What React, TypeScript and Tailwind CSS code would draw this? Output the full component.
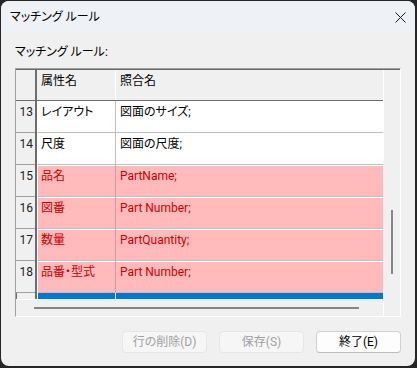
import React from "react";

type Row = { n: number; a: string; b: string; pink: boolean };

const rows: Row[] = [
  { n: 13, a: "レイアウト", b: "図面のサイズ;", pink: false },
  { n: 14, a: "尺度", b: "図面の尺度;", pink: false },
  { n: 15, a: "品名", b: "PartName;", pink: true },
  { n: 16, a: "図番", b: "Part Number;", pink: true },
  { n: 17, a: "数量", b: "PartQuantity;", pink: true },
  { n: 18, a: "品番・型式", b: "Part Number;", pink: true },
];

function DataRow({ r }: { r: Row }) {
  const bg = r.pink ? "bg-[#ffbbbb]" : "bg-white";
  const txt = r.pink ? "text-[#cc0000]" : "text-black";
  return (
    <div className="flex h-[32px]">
      <div className="w-[21px] flex border-r-2 border-r-[#6d6d6d]">
        <div className="flex-1 bg-[#f0f0f0] border-b border-b-[#a0a0a0] text-right pr-[2px] pt-[3px] leading-[16px] text-[12px] text-[#222]">
          {r.n}
        </div>
      </div>
      <div className={`w-[78px] border-t border-l border-white border-b border-b-[#c0c0c0] ${bg}`}>
        <div className={`pl-[3px] pt-[2px] leading-[16px] text-[12px] whitespace-nowrap ${txt}`}>{r.a}</div>
      </div>
      <div className={`w-px ${r.pink ? "bg-[#d49c9c]" : "bg-[#c0c0c0]"}`} />
      <div className={`w-[267px] border-t border-white border-b border-b-[#c0c0c0] ${bg}`}>
        <div className={`pl-[4px] pt-[2px] leading-[16px] text-[12px] whitespace-nowrap ${txt}`}>{r.b}</div>
      </div>
    </div>
  );
}

export default function App() {
  return (
    <div className="w-[417px] h-[368px] bg-[#262626] pl-px pt-px pr-[2px] pb-[2px] font-['Roboto','Noto_Sans_CJK_JP',sans-serif] [font-feature-settings:'palt']">
      <div className="w-full h-full rounded-[8px] overflow-hidden bg-[#f0f0f0] flex flex-col">
        {/* title bar */}
        <div className="h-[31px] bg-[#eef2f6] flex items-center justify-between pl-[9px] pr-[9px] shrink-0">
          <span className="text-[12px] leading-[16px] text-black">マッチング ルール</span>
          <svg width="11" height="11" viewBox="0 0 11 11" className="mt-[1px]">
            <path d="M0.5 0.5 L10.5 10.5 M10.5 0.5 L0.5 10.5" stroke="#1a1a1a" strokeWidth="1" fill="none" />
          </svg>
        </div>

        <div className="px-[14px] flex flex-col">
          <div className="mt-[12px] h-[16px] leading-[16px] text-[12px] text-black">マッチング ルール:</div>

          {/* grid */}
          <div className="mt-[8px] h-[249px] w-[386px] border-t border-l border-[#a0a0a0] border-r border-b border-r-white border-b-white">
            <div className="h-full border-t border-t-[#696969] flex">
              {/* main area */}
              <div className="w-[367px] flex flex-col">
                {/* header */}
                <div className="flex h-[31px] border-b border-b-[#6d6d6d]">
                  <div className="w-[21px] bg-[#f0f0f0] border-r-2 border-r-[#6d6d6d]" />
                  <div className="w-[78px] bg-[#f0f0f0] pl-[4px] pt-[3px] leading-[16px] text-[12px] text-black">属性名</div>
                  <div className="w-px bg-white" />
                  <div className="w-[267px] bg-[#f0f0f0] pl-[4px] pt-[3px] leading-[16px] text-[12px] text-black">照合名</div>
                </div>
                {rows.map((r) => (
                  <DataRow key={r.n} r={r} />
                ))}
                {/* partially visible selected row */}
                <div className="flex h-[6px]">
                  <div className="w-[21px] bg-[#f0f0f0] border-l border-l-[#6d6d6d] border-r-2 border-r-[#6d6d6d]" />
                  <div className="w-[78px] bg-white pl-px">
                    <div className="h-full bg-[#0078d7]" />
                  </div>
                  <div className="w-px bg-white" />
                  <div className="w-[267px] bg-[#0078d7]" />
                </div>
                {/* horizontal scrollbar */}
                <div className="flex-1 bg-[#f0f0f0] border-t border-t-white">
                  <div className="ml-[18px] mt-[7px] w-[325px] h-[2px] bg-[#858585]" />
                </div>
              </div>
              {/* vertical scrollbar */}
              <div className="flex-1 border-l border-l-white bg-[#f0f0f0]">
                <div className="ml-[7px] mt-[140px] w-[2px] h-[64px] bg-[#858585]" />
              </div>
            </div>
          </div>

          {/* buttons */}
          <div className="mt-[14px] flex justify-end gap-[12px]">
            <div className="w-[85px] h-[22px] rounded-[4px] border border-[#e6e6e6] bg-[#f6f6f6] flex items-center justify-center text-[12px] text-[#a0a0a0]">
              行の削除(D)
            </div>
            <div className="w-[85px] h-[22px] rounded-[4px] border border-[#e6e6e6] bg-[#f6f6f6] flex items-center justify-center text-[12px] text-[#a0a0a0]">
              保存(S)
            </div>
            <div className="w-[85px] h-[22px] rounded-[4px] border border-[#d0d0d0] border-b-[#bcbcbc] bg-[#fdfdfd] flex items-center justify-center text-[12px] text-black">
              終了(E)
            </div>
          </div>
        </div>
      </div>
    </div>
  );
}
